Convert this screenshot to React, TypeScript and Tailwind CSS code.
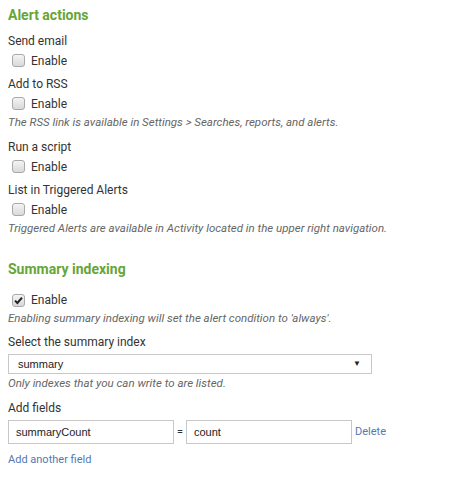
const font = { fontFamily: 'Roboto, "Liberation Sans", sans-serif' };
const arial = { fontFamily: '"Liberation Sans", Arial, sans-serif' };

function Check({ checked = false }: { checked?: boolean }) {
  return (
    <span className="ml-[4px] mr-[6px] flex h-[13px] w-[13px] items-center justify-center rounded-[3px] border border-[#a9a9a9] bg-gradient-to-b from-[#f4f4f4] to-[#d9d9d9]">
      {checked && (
        <svg width="9" height="9" viewBox="0 0 9 9">
          <path d="M1 4.6 L3.4 7 L8 1.6" fill="none" stroke="#222" strokeWidth="2" />
        </svg>
      )}
    </span>
  );
}

function EnableRow({ checked, h = 'h-[19px]' }: { checked?: boolean; h?: string }) {
  return (
    <div className={`flex ${h} items-center text-[12px] text-[#333]`}>
      <Check checked={checked} />
      <span>Enable</span>
    </div>
  );
}

function Help({ children }: { children: React.ReactNode }) {
  return <div className="flex h-full items-center text-[11.5px] italic text-[#666]">{children}</div>;
}

function Option({ label, help }: { label: string; help?: string }) {
  return (
    <div className="mb-[4px]">
      <div className="h-[20px] text-[12px] leading-[20px] text-[#333]">{label}</div>
      <EnableRow />
      {help && (
        <div className="h-[20px]">
          <Help>{help}</Help>
        </div>
      )}
    </div>
  );
}

export default function App() {
  return (
    <div className="flex h-[486px] w-[459px] flex-col bg-white px-[8px] pt-[5px]" style={font}>
      <h2 className="mb-[6px] h-[20px] text-[14px] font-bold leading-[20px] text-[#65a637]">Alert actions</h2>
      <Option label="Send email" />
      <Option label="Add to RSS" help="The RSS link is available in Settings > Searches, reports, and alerts." />
      <Option label="Run a script" />
      <Option label="List in Triggered Alerts" help="Triggered Alerts are available in Activity located in the upper right navigation." />

      <h2 className="mt-[16px] h-[20px] text-[14px] font-bold leading-[20px] text-[#65a637]">Summary indexing</h2>
      <div className="mt-[11px]">
        <EnableRow checked h="h-[20px]" />
      </div>
      <div className="h-[18px]">
        <Help>Enabling summary indexing will set the alert condition to 'always'.</Help>
      </div>

      <div className="mt-[4px] h-[20px] text-[12px] leading-[20px] text-[#333]">Select the summary index</div>
      <div
        className="mt-[2px] flex h-[20px] w-[364px] items-center justify-between border border-[#c8c8c8] pl-[9px] pr-[10px] text-[11px] text-[#222]"
        style={arial}
      >
        <span>summary</span>
        <span className="text-[8px]">▼</span>
      </div>
      <div className="mt-[1px] h-[18px]">
        <Help>Only indexes that you can write to are listed.</Help>
      </div>

      <div className="mt-[5px] h-[20px] text-[12px] leading-[20px] text-[#333]">Add fields</div>
      <div className="mt-[2px] flex h-[24px] items-center">
        <div
          className="flex h-[24px] w-[166px] items-center border border-[#c8c8c8] pl-[7px] text-[11px] text-[#222]"
          style={arial}
        >
          summaryCount
        </div>
        <span className="w-[12px] text-center text-[11px] text-[#333]">=</span>
        <div
          className="flex h-[24px] w-[166px] items-center border border-[#c8c8c8] pl-[7px] text-[11px] text-[#222]"
          style={arial}
        >
          count
        </div>
        <span className="ml-[3px] text-[11px] text-[#5379af]">Delete</span>
      </div>
      <div className="mt-[6px] h-[20px] text-[11px] leading-[20px] text-[#5379af]">Add another field</div>
    </div>
  );
}
